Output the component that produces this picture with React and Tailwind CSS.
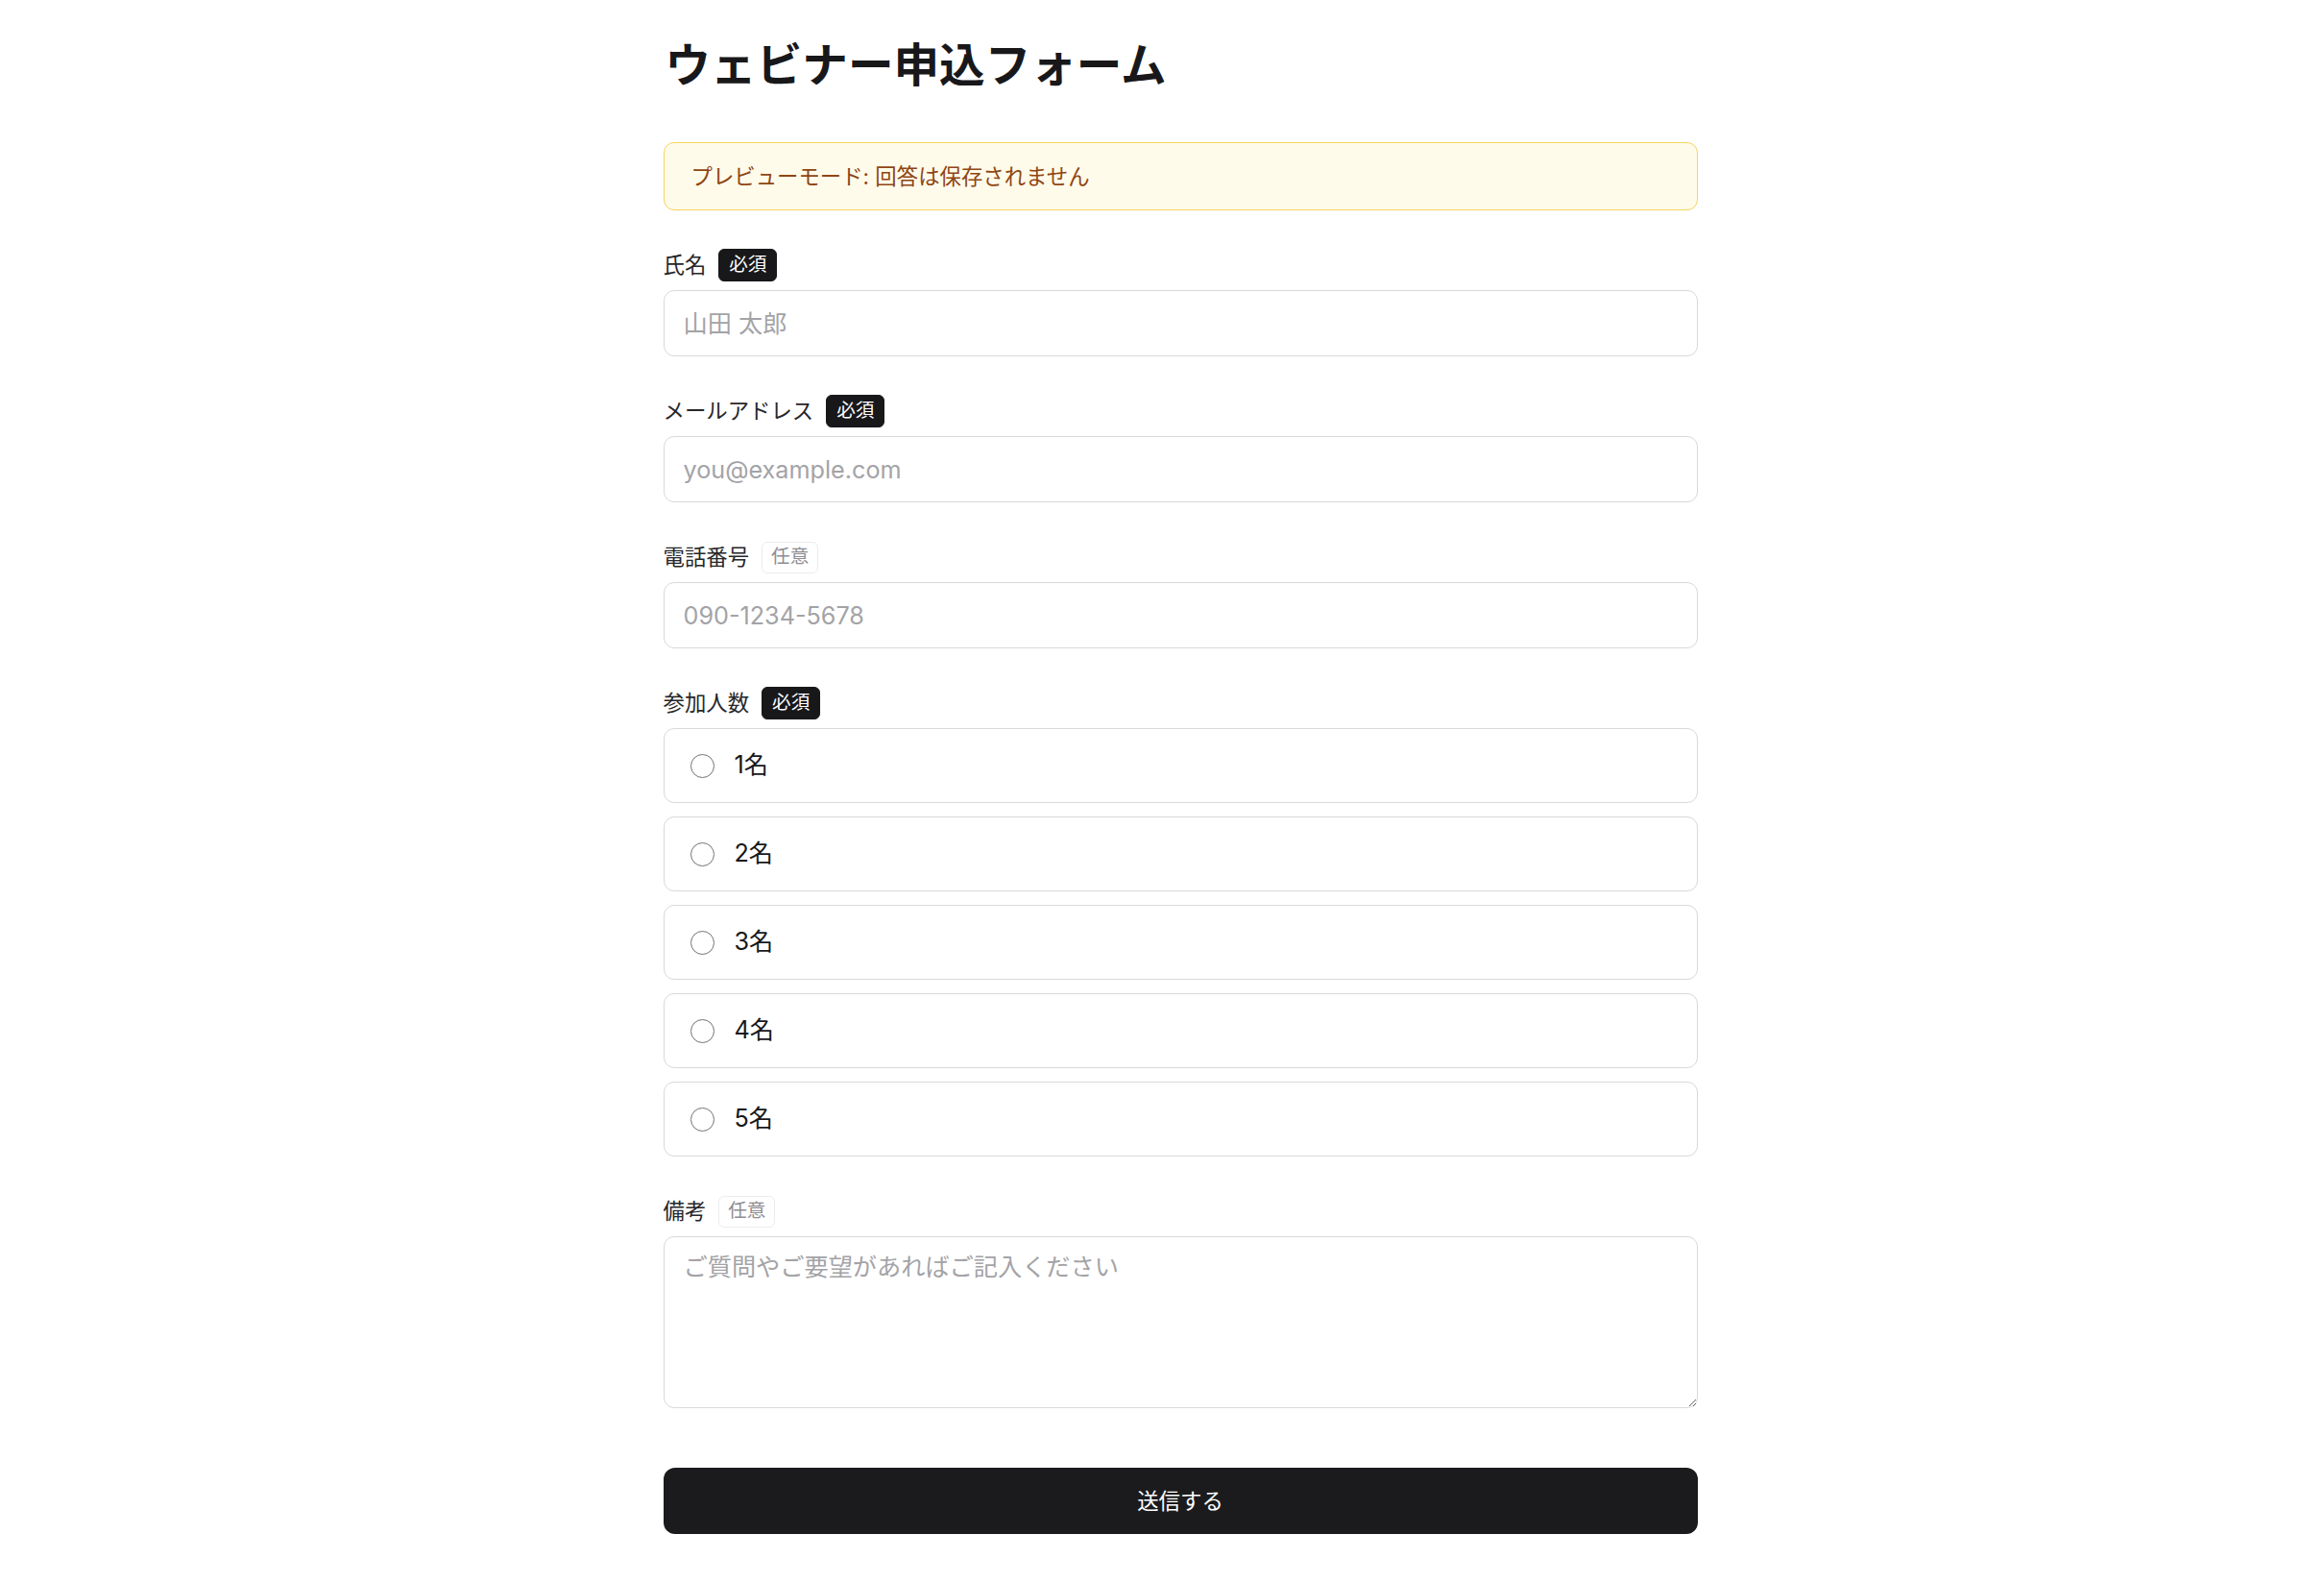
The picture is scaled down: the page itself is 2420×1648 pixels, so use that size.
import React from "react";

const FONT = { fontFamily: 'Inter, "Noto Sans CJK JP", "Noto Sans", sans-serif' };

function Badge({ required }) {
  return required ? (
    <span className="inline-flex items-center h-[34px] px-[10px] rounded-[6px] border border-[#18181b] bg-[#18181b] text-white text-[19.6px] leading-none">
      必須
    </span>
  ) : (
    <span className="inline-flex items-center h-[33px] px-[9px] rounded-[6px] border border-[#ececee] bg-white text-[#8e8e93] text-[19.6px] leading-none">
      任意
    </span>
  );
}

function Label({ text, required }) {
  return (
    <div className="flex items-center gap-[13px] h-[34px] mb-[9px]">
      <span className="text-[22.4px] text-[#27272a] leading-none">{text}</span>
      <Badge required={required} />
    </div>
  );
}

function TextField({ label, required, placeholder, type = "text" }) {
  return (
    <div>
      <Label text={label} required={required} />
      <input
        type={type}
        placeholder={placeholder}
        className="block w-full h-[69px] rounded-[11px] border border-[#d9d9dc] bg-white px-[20px] text-[25.2px] text-[#18181b] placeholder:text-[#a3a3a7] outline-none"
      />
    </div>
  );
}

export default function App() {
  const options = ["1名", "2名", "3名", "4名", "5名"];
  return (
    <div className="min-h-screen bg-white pl-[38px] pt-[40px] pb-[51px]" style={FONT}>
      <div className="w-[1077px] mx-auto">
        <h1 className="text-[47.6px] leading-[56px] font-bold text-[#18181b] mb-[52px] pl-[2px]">
          ウェビナー申込フォーム
        </h1>

        <div className="flex items-center h-[71px] rounded-[11px] border border-[#f4d55e] bg-[#fffbea] px-[28px] text-[22.4px] text-[#8f4512] mb-[40px]">
          プレビューモード: 回答は保存されません
        </div>

        <div className="flex flex-col gap-[40px]">
          <TextField label="氏名" required placeholder="山田 太郎" />
          <TextField label="メールアドレス" required placeholder="you@example.com" type="email" />
          <TextField label="電話番号" placeholder="090-1234-5678" type="tel" />

          <div>
            <Label text="参加人数" required />
            <div className="flex flex-col gap-[14px]">
              {options.map((o) => (
                <label
                  key={o}
                  className="flex items-center h-[78px] rounded-[11px] border border-[#d9d9dc] bg-white pl-[27px] gap-[21px] cursor-pointer"
                >
                  <span className="w-[25px] h-[25px] rounded-full border-[1.5px] border-[#737377] bg-white shrink-0" />
                  <span className="text-[25.2px] text-[#18181b] leading-none">{o}</span>
                </label>
              ))}
            </div>
          </div>

          <div>
            <Label text="備考" />
            <textarea
              placeholder="ご質問やご要望があればご記入ください"
              className="block w-full h-[179px] rounded-[11px] border border-[#d9d9dc] bg-white px-[20px] py-[14px] text-[25.2px] leading-[35px] text-[#18181b] placeholder:text-[#a3a3a7] outline-none"
            />
          </div>
        </div>

        <button className="mt-[62px] w-full h-[69px] rounded-[12px] bg-[#1b1b1d] text-white text-[22.4px]">
          送信する
        </button>
      </div>
    </div>
  );
}
